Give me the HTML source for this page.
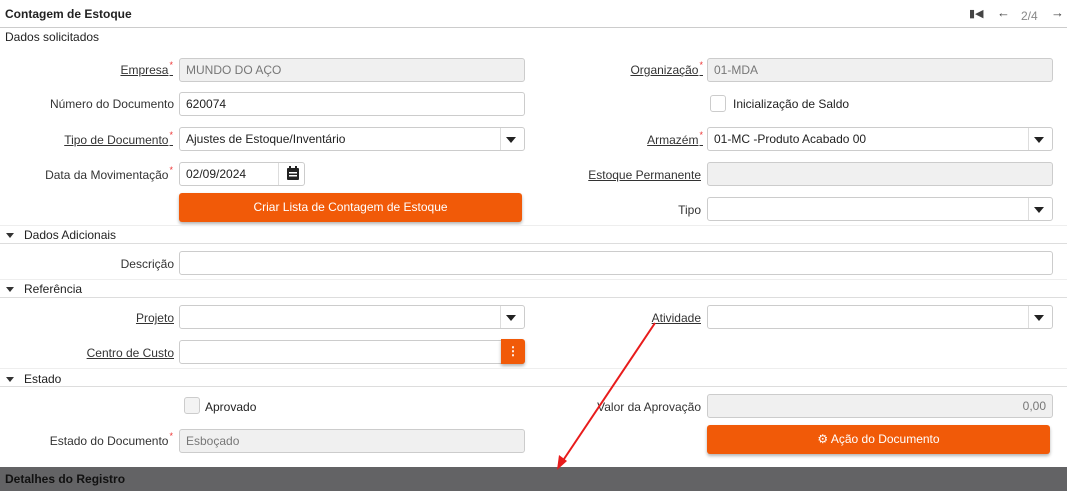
<!DOCTYPE html>
<html><head><meta charset="utf-8"><style>
*{box-sizing:border-box;margin:0;padding:0}
body{width:1067px;height:491px;background:#fff;font-family:"Liberation Sans",sans-serif;font-size:12px;color:#222;position:relative;overflow:hidden}
.a{position:absolute}
.lbl{position:absolute;text-align:right;white-space:nowrap;font-size:12px;color:#333}
.u{text-decoration:underline}
.req:after{content:"*";color:#e33;font-size:9px;position:relative;top:-6px;left:1px}
.in{position:absolute;height:24px;border:1px solid #ccc;border-radius:3px;background:#fff;padding:4px 6px;font-size:12px;color:#222}
.ro{background:#f0f0f0;color:#777}
.dd:after{content:"";position:absolute;right:8px;top:9px;border-left:5px solid transparent;border-right:5px solid transparent;border-top:6px solid #222}
.dd:before{content:"";position:absolute;right:23px;top:0;bottom:0;border-left:1px solid #ddd}
.line{position:absolute;left:0;width:1067px;height:1px;background:#ddd}
.sec{position:absolute;left:24px;font-size:12px;color:#222}
.tri{position:absolute;left:6px;border-left:4px solid transparent;border-right:4px solid transparent;border-top:5px solid #333}
.btn{position:absolute;background:#f15a08;color:#fff;border-radius:3px;text-align:center;font-size:12px;box-shadow:0 2px 3px rgba(0,0,0,.3)}
.cb{position:absolute;width:16px;height:17px;border:1px solid #ccc;border-radius:3px;background:#fff}
</style></head><body>
<div class="a" style="left:5px;top:7px;font-weight:bold;font-size:12px">Contagem de Estoque</div>
<div class="a" style="left:969px;top:7px;font-size:11px;color:#444">&#9646;&#9664;</div>
<div class="a" style="left:997px;top:5px;font-size:13px;color:#444">&#8592;</div>
<div class="a" style="left:1021px;top:9px;font-size:12px;color:#888">2/4</div>
<div class="a" style="left:1051px;top:5px;font-size:13px;color:#444">&#8594;</div>
<div class="line" style="top:27px;background:#ccc"></div>
<div class="a" style="left:5px;top:30px">Dados solicitados</div>

<div class="lbl u req" style="right:895px;top:63px">Empresa</div>
<div class="in ro" style="left:179px;top:58px;width:346px">MUNDO DO AÇO</div>
<div class="lbl" style="right:893px;top:97px">Número do Documento</div>
<div class="in" style="left:179px;top:92px;width:346px">620074</div>
<div class="lbl u req" style="right:895px;top:133px">Tipo de Documento</div>
<div class="in dd" style="left:179px;top:127px;width:346px">Ajustes de Estoque/Inventário</div>
<div class="lbl req" style="right:895px;top:168px">Data da Movimentação</div>
<div class="in" style="left:179px;top:162px;width:126px">02/09/2024</div>
<div class="a" style="left:278px;top:163px;width:1px;height:22px;background:#ddd"></div>
<svg class="a" style="left:286px;top:166px" width="14" height="15" viewBox="0 0 14 15"><rect x="1" y="2" width="12" height="12" rx="1" fill="#222"/><rect x="3" y="0" width="2" height="3" fill="#222"/><rect x="9" y="0" width="2" height="3" fill="#222"/><rect x="3" y="6" width="8" height="1.5" fill="#fff"/><rect x="3" y="9" width="8" height="1.5" fill="#fff"/></svg>
<div class="btn" style="left:179px;top:193px;width:343px;height:29px;line-height:29px">Criar Lista de Contagem de Estoque</div>

<div class="lbl u req" style="right:365px;top:63px">Organização</div>
<div class="in ro" style="left:707px;top:58px;width:346px">01-MDA</div>
<div class="cb" style="left:710px;top:95px"></div>
<div class="a" style="left:733px;top:97px">Inicialização de Saldo</div>
<div class="lbl u req" style="right:365px;top:133px">Armazém</div>
<div class="in dd" style="left:707px;top:127px;width:346px">01-MC -Produto Acabado 00</div>
<div class="lbl u" style="right:366px;top:168px">Estoque Permanente</div>
<div class="in ro" style="left:707px;top:162px;width:346px"></div>
<div class="lbl" style="right:366px;top:203px">Tipo</div>
<div class="in dd" style="left:707px;top:197px;width:346px"></div>

<div class="line" style="top:225px;background:#eee"></div>
<div class="tri" style="top:233px"></div><div class="sec" style="top:228px">Dados Adicionais</div>
<div class="line" style="top:243px"></div>
<div class="lbl" style="right:893px;top:257px">Descrição</div>
<div class="in" style="left:179px;top:251px;width:874px"></div>
<div class="line" style="top:279px;background:#eee"></div>
<div class="tri" style="top:287px"></div><div class="sec" style="top:282px">Referência</div>
<div class="line" style="top:297px"></div>
<div class="lbl u" style="right:893px;top:311px">Projeto</div>
<div class="in dd" style="left:179px;top:305px;width:346px"></div>
<div class="lbl u" style="right:366px;top:311px">Atividade</div>
<div class="in dd" style="left:707px;top:305px;width:346px"></div>
<div class="lbl u" style="right:893px;top:346px">Centro de Custo</div>
<div class="in" style="left:179px;top:340px;width:346px"></div>
<div class="btn" style="left:501px;top:339px;width:24px;height:25px;line-height:24px;font-weight:bold;border-radius:0 3px 3px 0">&#8942;</div>
<div class="line" style="top:368px;background:#eee"></div>
<div class="tri" style="top:377px"></div><div class="sec" style="top:372px">Estado</div>
<div class="line" style="top:386px"></div>
<div class="cb" style="left:184px;top:397px;background:#f3f3f3"></div>
<div class="a" style="left:205px;top:400px">Aprovado</div>
<div class="lbl" style="right:366px;top:400px">Valor da Aprovação</div>
<div class="in ro" style="left:707px;top:394px;width:346px;text-align:right">0,00</div>
<div class="lbl req" style="right:895px;top:434px">Estado do Documento</div>
<div class="in ro" style="left:179px;top:429px;width:346px">Esboçado</div>
<div class="btn" style="left:707px;top:425px;width:343px;height:29px;line-height:29px">&#9881; Ação do Documento</div>

<div class="a" style="left:0;top:467px;width:1067px;height:24px;background:#636365;color:#111;font-weight:bold;padding:5px 5px">Detalhes do Registro</div>
<svg class="a" style="left:0;top:0" width="1067" height="491"><line x1="655" y1="323" x2="562" y2="462" stroke="#e81c1c" stroke-width="2"/><polygon points="557,470 559,455 567,461" fill="#e81c1c"/></svg>
</body></html>
